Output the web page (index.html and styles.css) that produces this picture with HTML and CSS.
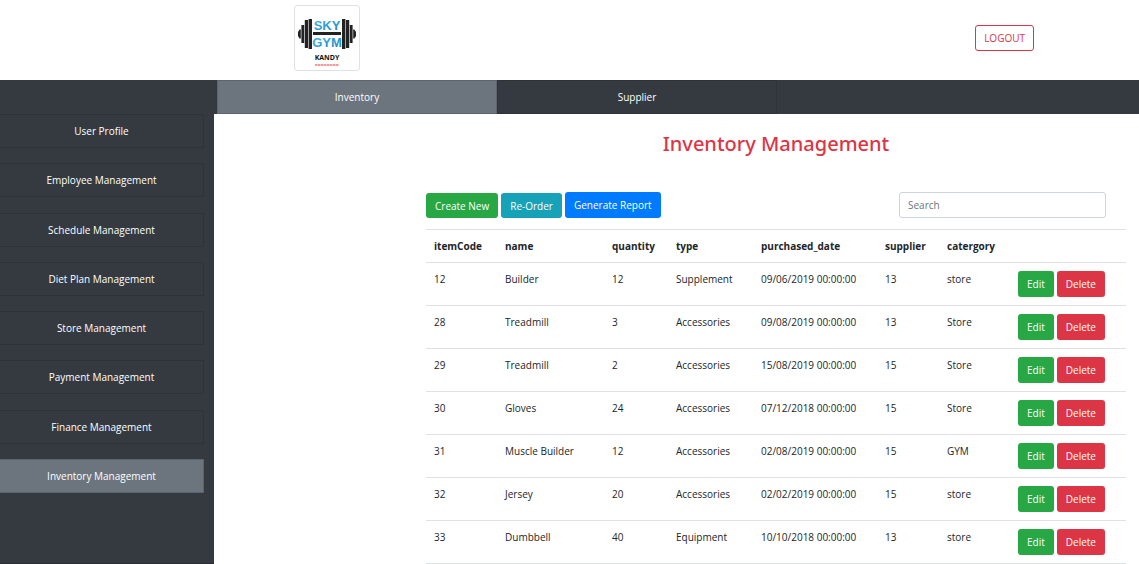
FILE: index.html
```html
<!DOCTYPE html>
<html lang="en">
<head>
<meta charset="utf-8">
<title>Inventory Management</title>
<link rel="stylesheet" href="styles.css">
</head>
<body>
<header class="header">
  <svg class="logo" viewBox="0 0 64 64" role="img" aria-label="Sky Gym Kandy">
    <defs>
      <linearGradient id="sky" x1="0" y1="0" x2="1" y2="1">
        <stop offset="0" stop-color="#43b9ea"/>
        <stop offset="1" stop-color="#1581c4"/>
      </linearGradient>
    </defs>
    <g fill="#222">
      <rect x="18" y="26" width="28" height="3"/>
      <rect x="13.6" y="13" width="3.4" height="30"/>
      <rect x="9.8" y="14" width="3.2" height="28"/>
      <rect x="6.4" y="19" width="2.8" height="18"/>
      <path d="M5.8 23.5v9H4.6L3 30v-4l1.600-2.500z"/>
      <rect x="47" y="13" width="3.400" height="30"/>
      <rect x="51" y="14" width="3.200" height="28"/>
      <rect x="54.800" y="19" width="2.800" height="18"/>
      <path d="M58.200 23.500v9h1.200L61 30v-4l-1.600-2.500z"/>
    </g>
    <text class="logo-name" x="32" y="24">SKY</text>
    <text class="logo-name" x="32" y="41">GYM</text>
    <text class="logo-city" x="32" y="54">KANDY</text>
    <path d="M20 59h24" stroke="#f07878" stroke-width="1.400" stroke-dasharray="2.500 .5"/>
  </svg>
  <button class="btn btn-outline" type="button">LOGOUT</button>
</header>
<div class="layout">
  <nav class="sidebar" aria-label="Sections">
    <div class="menu">
      <button class="menu-item" type="button">User Profile</button>
      <button class="menu-item" type="button">Employee Management</button>
      <button class="menu-item" type="button">Schedule Management</button>
      <button class="menu-item" type="button">Diet Plan Management</button>
      <button class="menu-item" type="button">Store Management</button>
      <button class="menu-item" type="button">Payment Management</button>
      <button class="menu-item" type="button">Finance Management</button>
      <button class="menu-item active" type="button">Inventory Management</button>
    </div>
  </nav>
  <div class="main">
    <nav class="tabs" aria-label="Inventory sections">
      <button class="tab active" type="button">Inventory</button>
      <button class="tab" type="button">Supplier</button>
    </nav>
    <main class="content">
      <h1 class="title">Inventory Management</h1>
      <div class="toolbar">
        <button class="btn btn-short btn-green" type="button">Create New</button>
        <button class="btn btn-short btn-teal" type="button">Re-Order</button>
        <button class="btn btn-blue" type="button">Generate Report</button>
        <input class="search" type="text" placeholder="Search" aria-label="Search">
      </div>
      <table class="table">
        <colgroup>
          <col class="col-code"><col class="col-name"><col class="col-qty"><col class="col-type"><col class="col-date"><col class="col-supplier"><col class="col-category"><col>
        </colgroup>
        <thead>
          <tr><th>itemCode</th><th>name</th><th>quantity</th><th>type</th><th>purchased_date</th><th>supplier</th><th>catergory</th><th></th></tr>
        </thead>
        <tbody>
          <tr><td>12</td><td>Builder</td><td>12</td><td>Supplement</td><td>09/06/2019 00:00:00</td><td>13</td><td>store</td><td><div class="actions"><button class="btn btn-green" type="button">Edit</button><button class="btn btn-red" type="button">Delete</button></div></td></tr>
          <tr><td>28</td><td>Treadmill</td><td>3</td><td>Accessories</td><td>09/08/2019 00:00:00</td><td>13</td><td>Store</td><td><div class="actions"><button class="btn btn-green" type="button">Edit</button><button class="btn btn-red" type="button">Delete</button></div></td></tr>
          <tr><td>29</td><td>Treadmill</td><td>2</td><td>Accessories</td><td>15/08/2019 00:00:00</td><td>15</td><td>Store</td><td><div class="actions"><button class="btn btn-green" type="button">Edit</button><button class="btn btn-red" type="button">Delete</button></div></td></tr>
          <tr><td>30</td><td>Gloves</td><td>24</td><td>Accessories</td><td>07/12/2018 00:00:00</td><td>15</td><td>Store</td><td><div class="actions"><button class="btn btn-green" type="button">Edit</button><button class="btn btn-red" type="button">Delete</button></div></td></tr>
          <tr><td>31</td><td>Muscle Builder</td><td>12</td><td>Accessories</td><td>02/08/2019 00:00:00</td><td>15</td><td>GYM</td><td><div class="actions"><button class="btn btn-green" type="button">Edit</button><button class="btn btn-red" type="button">Delete</button></div></td></tr>
          <tr><td>32</td><td>Jersey</td><td>20</td><td>Accessories</td><td>02/02/2019 00:00:00</td><td>15</td><td>store</td><td><div class="actions"><button class="btn btn-green" type="button">Edit</button><button class="btn btn-red" type="button">Delete</button></div></td></tr>
          <tr><td>33</td><td>Dumbbell</td><td>40</td><td>Equipment</td><td>10/10/2018 00:00:00</td><td>13</td><td>store</td><td><div class="actions"><button class="btn btn-green" type="button">Edit</button><button class="btn btn-red" type="button">Delete</button></div></td></tr>
        </tbody>
      </table>
    </main>
  </div>
</div>
</body>
</html>
```
FILE: styles.css
```css
* { box-sizing: border-box; }
body {
  margin: 0;
  min-height: 100vh;
  display: flex;
  flex-direction: column;
  background: #fff;
  color: #212529;
  font: 10px/16px "Open Sans", "Noto Sans", sans-serif;
}
button, input { font: inherit; margin: 0; }
button { cursor: pointer; }

.header {
  height: 80px;
  padding: 5px 105px 9px 294px;
  display: flex;
  align-items: center;
  justify-content: space-between;
}
.logo {
  width: 66px;
  height: 66px;
  border: 1px solid #dee2e6;
  border-radius: 3px;
}
.logo-name {
  font: 700 13px "Liberation Sans", Arial, sans-serif;
  fill: url(#sky);
  text-anchor: middle;
}
.logo-city {
  font: 700 7px "Open Sans", sans-serif;
  fill: #111;
  text-anchor: middle;
}

.btn {
  height: 26px;
  padding: 0 8px;
  border: 1px solid transparent;
  border-radius: 3px;
  color: #fff;
  white-space: nowrap;
}
.btn-short { height: 25px; }
.btn-green { background: #28a745; }
.btn-teal { background: #17a2b8; }
.btn-blue { background: #007bff; }
.btn-red { background: #dc3545; }
.btn-outline {
  background: #fff;
  border-color: #dc3545;
  color: #dc3545;
}

.layout { flex: 1; display: flex; }
.sidebar {
  flex: 0 0 214px;
  padding: 34px 10px 0 0;
  background: #343a40;
  border-bottom: 1px solid #292d32;
}
.menu {
  height: 379px;
  display: flex;
  flex-direction: column;
  justify-content: space-between;
}
.menu-item, .tab {
  height: 34px;
  padding: 0 12px;
  background: #343a40;
  border: 1px solid #2e3338;
  color: #fff;
}
.menu-item { border-left: 0; }
.menu-item.active, .tab.active {
  background: #6c757d;
  border-color: #5c656d;
}

.main { flex: 1; min-width: 0; }
.tabs {
  display: flex;
  padding-left: 3px;
  background: #343a40;
}
.tab { width: 280px; }
.content { padding: 14px 13px 0 212px; }
.title {
  margin: 0 0 32px;
  font-family: "Noto Sans", "Open Sans", sans-serif;
  font-size: 20px;
  line-height: 32px;
  font-weight: 500;
  text-align: center;
  color: #dc3545;
}
.toolbar {
  display: flex;
  align-items: flex-end;
  gap: 3px;
  padding-right: 20px;
  margin-bottom: 11px;
}
.search {
  width: 207px;
  height: 26px;
  margin-left: auto;
  padding: 0 8px;
  border: 1px solid #ced4da;
  border-radius: 3px;
  color: #495057;
}
.search::placeholder { color: #6c757d; opacity: 1; }

.table {
  width: 100%;
  table-layout: fixed;
  border-collapse: collapse;
}
.table th, .table td {
  padding: 8px 0 8px 8px;
  border-top: 1px solid #dee2e6;
  text-align: left;
  vertical-align: top;
  white-space: nowrap;
}
.table th { font-weight: 700; }
.table tbody tr:last-child td { border-bottom: 1px solid #dee2e6; }
.col-code { width: 71px; }
.col-name { width: 107px; }
.col-qty { width: 64px; }
.col-type { width: 85px; }
.col-date { width: 124px; }
.col-supplier { width: 62px; }
.col-category { width: 71px; }
.actions { display: flex; gap: 3px; }
```
